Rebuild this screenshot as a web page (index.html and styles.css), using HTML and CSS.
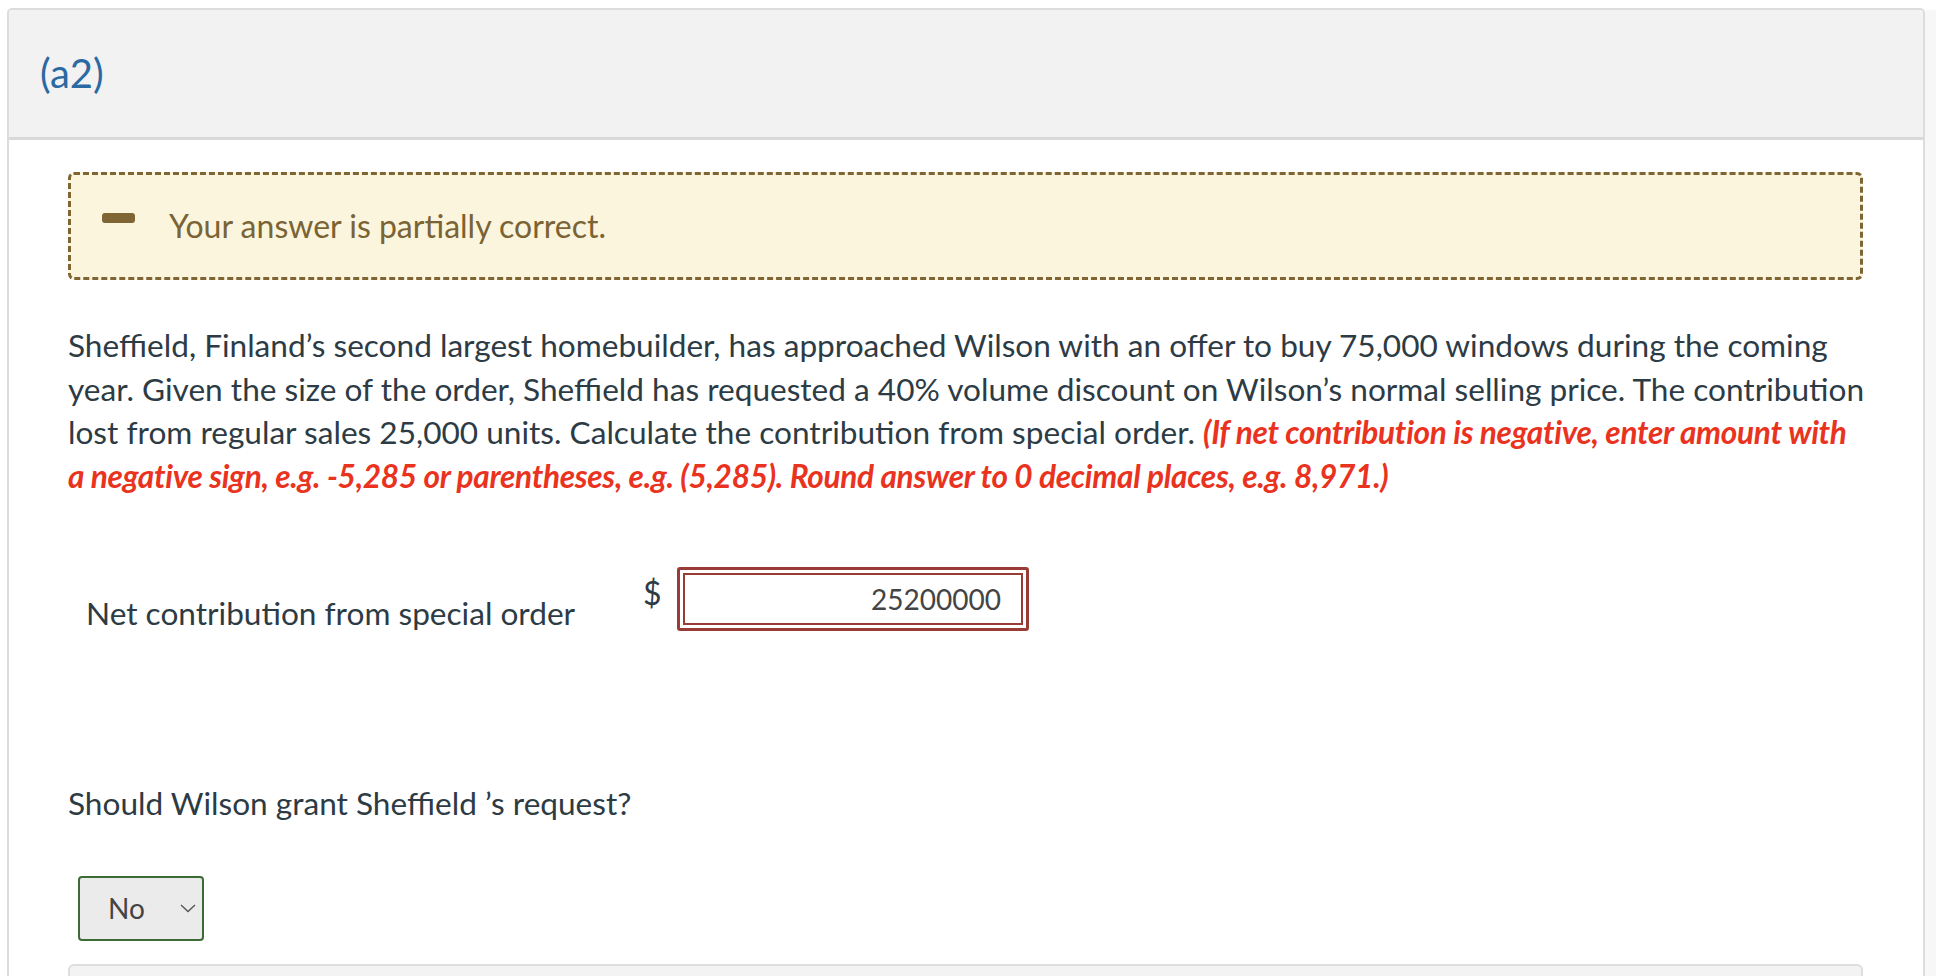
FILE: index.html
```html
<!DOCTYPE html>
<html lang="en">
<head>
<meta charset="utf-8">
<title>(a2)</title>
<link rel="stylesheet" href="styles.css">
</head>
<body>
<div class="page">
  <div class="card">
    <div class="card-head">
      <h2 class="part-title">(a2)</h2>
    </div>
    <div class="card-body">
      <div class="feedback">
        <span class="feedback-icon"></span>
        <span class="feedback-text">Your answer is partially correct.</span>
      </div>
      <p class="question intro">Sheffield, Finland’s second largest homebuilder, has approached Wilson with an offer to buy 75,000 windows during the coming year. Given the size of the order, Sheffield has requested a 40% volume discount on Wilson’s normal selling price. The contribution lost from regular sales 25,000 units. Calculate the contribution from special order. <em class="hint">(If net contribution is negative, enter amount with a&nbsp;negative sign, e.g. -5,285 or parentheses, e.g. (5,285). Round answer to 0 decimal places, e.g. 8,971.)</em></p>
      <div class="answer-row">
        <span class="answer-label">Net contribution from special order</span>
        <span class="currency">$</span>
        <span class="input-wrap"><span class="input-field">25200000</span></span>
      </div>
      <p class="question second">Should Wilson grant Sheffield ’s request?</p>
      <div class="select">
        <span class="select-value">No</span>
        <svg class="chevron" width="16" height="9" viewBox="0 0 16 9"><path d="M1 1 L8 7.5 L15 1" fill="none" stroke="#555" stroke-width="1.4"/></svg>
      </div>
      <div class="panel"></div>
    </div>
  </div>
  <div class="strip"></div>
</div>
</body>
</html>
```

FILE: styles.css
```css
html, body {
  margin: 0;
  padding: 0;
  background: #ffffff;
  height: 100%;
  overflow: hidden;
}
body {
  font-family: Lato, "Liberation Sans", sans-serif;
  color: #2d3b45;
}
.page {
  display: flex;
  height: 976px;
}
.card {
  margin: 8px 0 0 7px;
  width: 1918px;
  box-sizing: border-box;
  border: 2px solid #dcdcdc;
  border-bottom: none;
  border-radius: 5px 5px 0 0;
  background: #ffffff;
  overflow: hidden;
}
.card-head {
  background: #f2f2f2;
  height: 127px;
  border-bottom: 3px solid #d9d9d9;
  padding-left: 31px;
  box-sizing: content-box;
}
.part-title {
  margin: 0;
  padding-top: 39px;
  font-weight: 400;
  font-size: 40px;
  line-height: 48px;
  color: #2b69a3;
}
.card-body {
  padding: 32px 60px 0 59px;
}
.feedback {
  height: 108px;
  box-sizing: border-box;
  border: 3px dashed #7f6534;
  border-radius: 6px;
  background: #fbf5dd;
  display: flex;
  align-items: flex-start;
  padding: 31px 0 0 31px;
}
.feedback-icon {
  width: 33px;
  height: 10px;
  border-radius: 3px;
  background: #7f6534;
  margin-top: 7px;
  margin-right: 34px;
}
.feedback-text {
  font-size: 32px;
  line-height: 40px;
  color: #7a6334;
}
.question {
  margin: 44px 0 0 0;
  font-size: 31.6px;
  line-height: 43.5px;
}
.question.intro {
  margin-right: -20px;
}
.hint {
  color: #e9331e;
  font-weight: 700;
  font-style: italic;
  letter-spacing: -0.3px;
}
.answer-row {
  display: flex;
  align-items: flex-start;
  margin-top: 69px;
  padding-left: 18px;
}
.answer-label {
  width: 557px;
  padding-top: 24px;
  font-size: 31.6px;
  line-height: 44px;
}
.currency {
  font-size: 32px;
  line-height: 44px;
  margin-top: 4px;
  width: 34px;
}
.input-wrap {
  display: block;
  border: 3px solid #9a3c36;
  border-radius: 3px;
  padding: 3px;
  background: #fff;
}
.input-field {
  display: block;
  width: 340px;
  height: 52px;
  box-sizing: border-box;
  border: 2px solid #9a3c36;
  text-align: right;
  padding-right: 20px;
  font-size: 28px;
  line-height: 48px;
  color: #444;
}
.question.second {
  margin-top: 147px;
}
.select {
  margin: 50px 0 0 10px;
  width: 126px;
  height: 65px;
  box-sizing: border-box;
  border: 2px solid #3d6b36;
  border-radius: 4px;
  background: #ebebeb;
  display: flex;
  align-items: center;
  padding-left: 28px;
}
.select-value {
  font-size: 28px;
  line-height: 40px;
  color: #444;
  width: 72px;
}
.chevron {
  display: block;
}
.panel {
  margin-top: 23px;
  height: 80px;
  border: 2px solid #dedede;
  border-radius: 6px;
  background: #f3f3f3;
}
.strip {
  flex: 1;
  background: #f7f7f7;
  margin-top: 10px;
}
```
